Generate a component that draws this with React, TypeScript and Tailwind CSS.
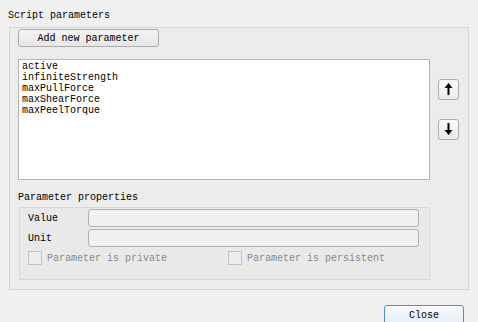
import React from "react";

function ArrowUp() {
  return (
    <svg width="21" height="21" viewBox="0 0 21 21">
      <polygon points="10.5,4 14.5,9 6.5,9" fill="#000" />
      <rect x="9.5" y="8.5" width="2" height="7.5" fill="#000" />
    </svg>
  );
}

function ArrowDown() {
  return (
    <svg width="21" height="21" viewBox="0 0 21 21">
      <polygon points="10.5,16 14.5,11 6.5,11" fill="#000" />
      <rect x="9.5" y="4" width="2" height="7.5" fill="#000" />
    </svg>
  );
}

export default function App() {
  const items = ["active", "infiniteStrength", "maxPullForce", "maxShearForce", "maxPeelTorque"];
  return (
    <div className="w-[478px] h-[322px] bg-[#f0f0f0] overflow-hidden font-['Liberation_Mono',monospace] text-[10px] leading-[11px] text-black flex flex-col">
      <div className="pl-[8px] pt-[10px] h-[27px] shrink-0">Script parameters</div>
      <div className="ml-[9px] w-[460px] h-[263px] shrink-0 border border-[#d5d5d5] bg-[#ececec] flex flex-col">
        <button className="ml-[8px] mt-[1px] w-[141px] h-[18px] shrink-0 rounded-[3px] border border-[#acacac] bg-gradient-to-b from-[#f4f4f4] to-[#e6e6e6] flex items-center justify-center">
          Add new parameter
        </button>
        <div className="flex mt-[12px] shrink-0">
          <div className="ml-[8px] w-[412px] h-[121px] border border-[#b5b5b5] bg-white px-[3px] pt-[1px] flex flex-col">
            {items.map((t) => (
              <div key={t}>{t}</div>
            ))}
          </div>
          <div className="ml-[8px] flex flex-col pt-[20px] gap-[19px]">
            <div className="w-[21px] h-[21px] rounded-[3px] border border-[#acacac] bg-gradient-to-b from-[#fbfbfb] to-[#ececec] flex items-center justify-center">
              <div className="-m-px"><ArrowUp /></div>
            </div>
            <div className="w-[21px] h-[21px] rounded-[3px] border border-[#acacac] bg-gradient-to-b from-[#fbfbfb] to-[#ececec] flex items-center justify-center">
              <div className="-m-px"><ArrowDown /></div>
            </div>
          </div>
        </div>
        <div className="ml-[8px] mt-[12px] shrink-0">Parameter properties</div>
        <div className="ml-[9px] mt-[4px] w-[411px] h-[73px] shrink-0 border border-[#d8d8d8] bg-[#e9e9e9] flex flex-col">
          <div className="flex items-center mt-[1px] h-[18px]">
            <div className="pl-[8px] w-[68px]">Value</div>
            <div className="w-[331px] h-[18px] rounded-[3px] border border-[#b3b3b3] bg-[#f0f0f0]" />
          </div>
          <div className="flex items-center mt-[2px] h-[18px]">
            <div className="pl-[8px] w-[68px]">Unit</div>
            <div className="w-[331px] h-[18px] rounded-[3px] border border-[#b3b3b3] bg-[#f0f0f0]" />
          </div>
          <div className="flex items-center mt-[4px] h-[14px] text-[#8a8a8a]">
            <div className="pl-[8px] w-[208px] flex items-center">
              <div className="w-[14px] h-[14px] border border-[#c3c3c3] bg-[#ececec]" />
              <span className="ml-[5px]">Parameter is private</span>
            </div>
            <div className="flex items-center">
              <div className="w-[14px] h-[14px] border border-[#c3c3c3] bg-[#ececec]" />
              <span className="ml-[5px]">Parameter is persistent</span>
            </div>
          </div>
        </div>
      </div>
      <button className="ml-[384px] mt-[15px] w-[80px] h-[20px] shrink-0 rounded-[3px] border border-[#4d90d6] bg-gradient-to-b from-[#f6f9fc] to-[#e5eef7] flex items-center justify-center">
        Close
      </button>
    </div>
  );
}
